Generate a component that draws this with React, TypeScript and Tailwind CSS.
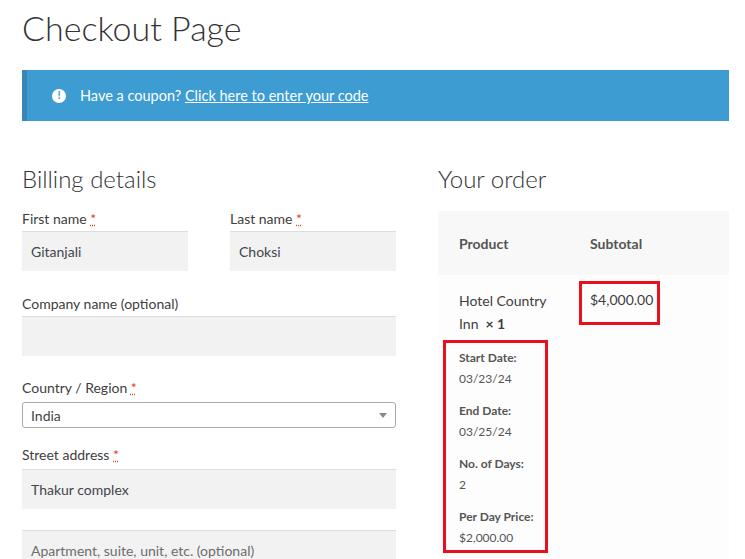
export default function App() {
  const f = { fontFamily: "Lato, 'Open Sans', sans-serif" };
  const req = <span className="text-[#e2401c] underline decoration-dotted">*</span>;
  return (
    <div style={f} className="w-[745px] h-[559px] overflow-hidden bg-white text-[#404040]">
      <div className="pl-[22px] pr-[16px]">
        <h1 className="text-[34px] font-light leading-[56px] text-[#333]">Checkout Page</h1>
        <div className="mt-[14px] h-[51px] bg-[#3d9cd2] border-l-[5px] border-[#3a85b5] flex items-center pl-[25px] text-white text-[14.5px]">
          <span className="w-[14px] h-[14px] rounded-full bg-white text-[#3d9cd2] text-[11px] font-bold flex items-center justify-center mr-[14px]">!</span>
          Have a coupon?&nbsp;<span className="underline">Click here to enter your code</span>
        </div>
        <div className="flex mt-[43px] gap-[42px]">
          <div className="w-[374px]">
            <h2 className="text-[24px] font-light text-[#333] leading-[30px]">Billing details</h2>
            <div className="flex gap-[42px] mt-[16px]">
              <div className="w-[166px]">
                <div className="text-[14px] leading-[18px]">First name {req}</div>
                <div className="mt-[3px] h-[40px] bg-[#f2f2f2] border-t border-[#ddd] flex items-center px-[9px] text-[14px] text-[#43454b]">Gitanjali</div>
              </div>
              <div className="w-[166px]">
                <div className="text-[14px] leading-[18px]">Last name {req}</div>
                <div className="mt-[3px] h-[40px] bg-[#f2f2f2] border-t border-[#ddd] flex items-center px-[9px] text-[14px] text-[#43454b]">Choksi</div>
              </div>
            </div>
            <div className="text-[14px] leading-[18px] mt-[24px]">Company name (optional)</div>
            <div className="mt-[3px] h-[40px] bg-[#f2f2f2] border-t border-[#ddd]"></div>
            <div className="text-[14px] leading-[18px] mt-[23px]">Country / Region {req}</div>
            <div className="mt-[5px] h-[26px] border border-[#aaa] rounded-[3px] flex items-center justify-between px-[8px] text-[14px] text-[#444]">
              India<span className="w-0 h-0 border-l-[4px] border-r-[4px] border-t-[5px] border-l-transparent border-r-transparent border-t-[#888]"></span>
            </div>
            <div className="text-[14px] leading-[18px] mt-[18px]">Street address {req}</div>
            <div className="mt-[5px] h-[40px] bg-[#f2f2f2] border-t border-[#ddd] flex items-center px-[9px] text-[14px] text-[#43454b]">Thakur complex</div>
            <div className="mt-[21px] h-[40px] bg-[#f2f2f2] border-t border-[#ddd] flex items-center px-[9px] text-[14px] text-[#6d6d6d]">Apartment, suite, unit, etc. (optional)</div>
          </div>
          <div className="w-[291px]">
            <h2 className="text-[24px] font-light text-[#333] leading-[30px]">Your order</h2>
            <div className="mt-[17px] bg-[#fdfdfd]">
              <div className="h-[64px] bg-[#f8f8f8] flex items-center text-[14px] font-bold text-[#555]">
                <span className="w-[152px] pl-[21px]">Product</span><span>Subtotal</span>
              </div>
              <div className="relative flex pt-[14px] pb-[20px]">
                <div className="w-[152px] pl-[21px] text-[14px] leading-[23px]">
                  <div>Hotel Country<br />Inn <span className="font-bold">&nbsp;× 1</span></div>
                  <div className="mt-[5px] -ml-[16px] w-[105px] border-[3px] border-[#e8101c] pl-[13px] pt-[4px] pb-[2px] text-[12px] text-[#555]">
                    {[["Start Date:", "03/23/24"], ["End Date:", "03/25/24"], ["No. of Days:", "2"], ["Per Day Price:", "$2,000.00"]].map(([k, v], i) => (
                      <div key={k} className={i ? "mt-[11px]" : ""}>
                        <div className="font-bold leading-[22px]">{k}</div>
                        <div className="leading-[20px]">{v}</div>
                      </div>
                    ))}
                  </div>
                </div>
                <div className="-ml-[11px] -mt-[8px] h-[44px] w-[81px] border-[3px] border-[#e8101c] flex pt-[5px] pl-[8px] text-[14px]">$4,000.00</div>
              </div>
            </div>
          </div>
        </div>
      </div>
    </div>
  );
}
